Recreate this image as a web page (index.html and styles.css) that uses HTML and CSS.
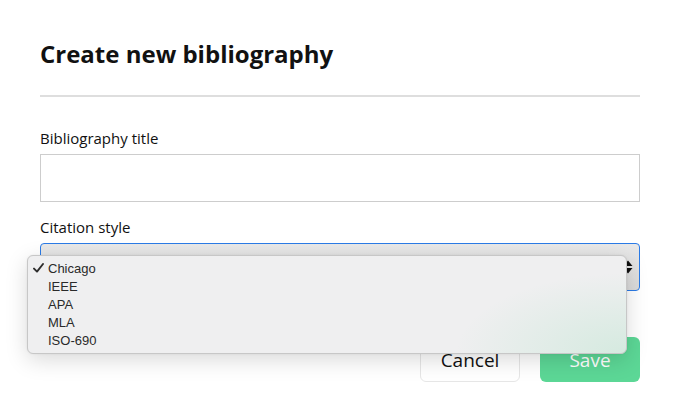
FILE: index.html
```html
<!DOCTYPE html>
<html lang="en">
<head>
<meta charset="utf-8">
<title>Create new bibliography</title>
<link rel="stylesheet" href="styles.css">
</head>
<body>
<div class="modal">
  <h2 class="modal-title">Create new bibliography</h2>
  <hr class="divider">
  <form class="form">
    <div class="field">
      <label class="label" for="bib-title">Bibliography title</label>
      <input class="text-input" id="bib-title" type="text">
    </div>
    <div class="field">
      <label class="label">Citation style</label>
      <div class="select-wrap">
        <div class="select">
          <span class="select-arrows">
            <svg width="10" height="14" viewBox="0 0 10 14"><path d="M5 0.5 L9.5 6 L0.5 6 Z M0.5 8 L9.5 8 L5 13.5 Z" fill="#111"/></svg>
          </span>
        </div>
        <ul class="menu">
          <li class="menu-item selected"><span class="check"><svg width="11" height="10" viewBox="0 0 11 10"><path d="M1 5.6 L4 8.6 L10 1" fill="none" stroke="#2c2c2c" stroke-width="1.9" stroke-linecap="round" stroke-linejoin="round"/></svg></span>Chicago</li>
          <li class="menu-item"><span class="check"></span>IEEE</li>
          <li class="menu-item"><span class="check"></span>APA</li>
          <li class="menu-item"><span class="check"></span>MLA</li>
          <li class="menu-item"><span class="check"></span>ISO-690</li>
        </ul>
      </div>
    </div>
    <div class="actions">
      <button type="button" class="btn btn-cancel">Cancel</button>
      <button type="button" class="btn btn-save">Save</button>
    </div>
  </form>
</div>
</body>
</html>
```
FILE: styles.css
```css
html, body {
  margin: 0;
  padding: 0;
  background: #ffffff;
}
body {
  font-family: "Open Sans", "Liberation Sans", sans-serif;
  color: #111;
}
.modal {
  width: 600px;
  padding: 34px 38px 0 40px;
}
.modal-title {
  margin: 0;
  font-size: 24px;
  font-weight: 700;
  line-height: 40px;
  color: #111;
}
.divider {
  margin: 21px 0 0 0;
  border: 0;
  height: 2px;
  background: #dedede;
}
.form {
  display: flex;
  flex-direction: column;
  padding-top: 29px;
}
.field {
  display: flex;
  flex-direction: column;
}
.field + .field {
  margin-top: 13px;
}
.label {
  font-size: 15px;
  line-height: 24px;
  color: #111;
  margin-bottom: 4px;
}
.text-input {
  box-sizing: border-box;
  width: 600px;
  height: 48px;
  margin: 0;
  border: 1px solid #cdcdcd;
  border-radius: 0;
  background: #fff;
}
.select-wrap {
  position: relative;
}
.select {
  box-sizing: border-box;
  height: 48px;
  width: 600px;
  border: 1px solid #2b7be6;
  border-radius: 4px;
  background: linear-gradient(#e8e8e8, #dadada);
  display: flex;
  align-items: center;
  justify-content: flex-end;
  padding-right: 6px;
}
.select-arrows {
  display: flex;
}
.menu {
  position: absolute;
  left: -13px;
  top: 12px;
  box-sizing: border-box;
  width: 600px;
  height: 99px;
  margin: 0;
  padding: 3px 0 0 0;
  list-style: none;
  border: 1px solid #c7c7c7;
  border-radius: 6px;
  background:
    radial-gradient(ellipse 170px 80px at 100% 100%, rgba(120, 215, 165, 0.22), rgba(120, 215, 165, 0) 100%),
    #efeff0;
  box-shadow: 0 6px 22px rgba(0, 0, 0, 0.15), 0 0 2px rgba(0, 0, 0, 0.08);
}
.menu-item {
  display: flex;
  align-items: center;
  height: 18px;
  font-family: "Liberation Sans", Arial, sans-serif;
  font-size: 13px;
  color: #2a2a2a;
}
.check {
  display: inline-flex;
  align-items: center;
  width: 15px;
  padding-left: 5px;
}
.actions {
  display: flex;
  justify-content: flex-end;
  gap: 20px;
  margin-top: 46px;
}
.btn {
  box-sizing: border-box;
  width: 100px;
  height: 45px;
  border-radius: 6px;
  font-family: "Open Sans", sans-serif;
  font-size: 19px;
  padding: 0;
  cursor: pointer;
}
.btn-cancel {
  background: #fff;
  border: 1px solid #e6e6e6;
  color: #111;
}
.btn-save {
  background: #5cd796;
  border: 0;
  color: #fff;
}
```
